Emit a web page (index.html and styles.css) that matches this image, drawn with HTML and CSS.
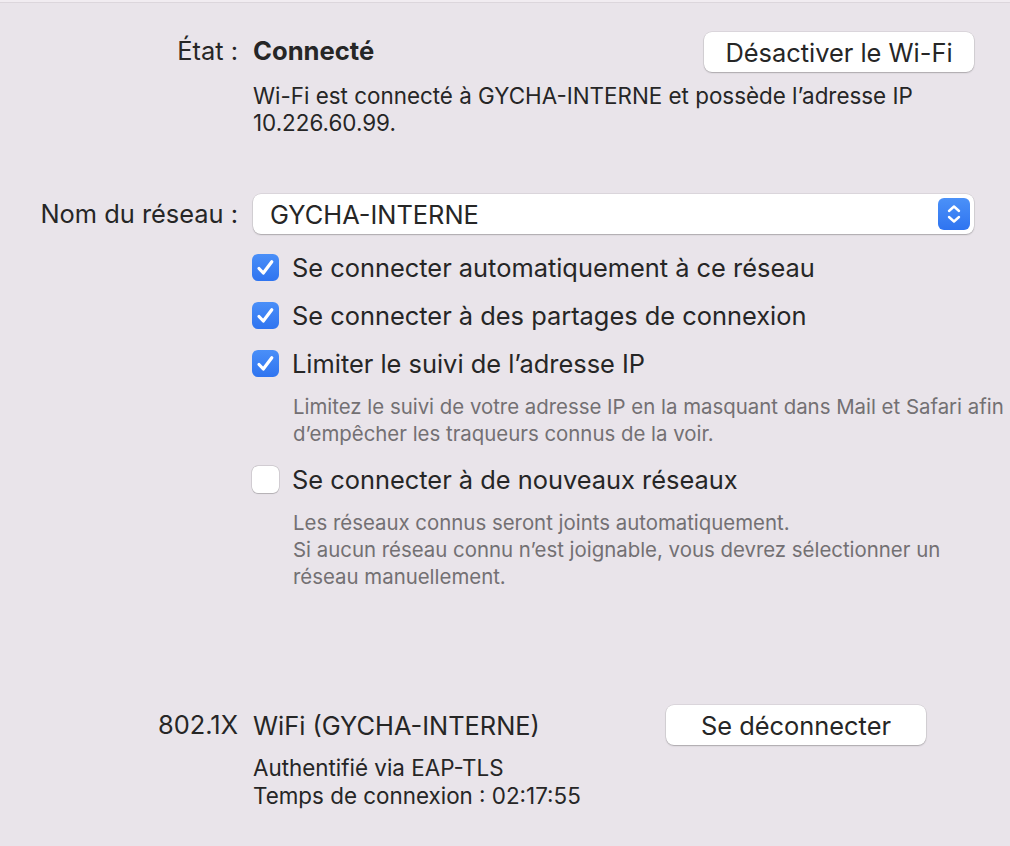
FILE: index.html
```html
<!DOCTYPE html>
<html lang="fr">
<head>
<meta charset="utf-8">
<link rel="stylesheet" href="styles.css">
</head>
<body>
<div class="topbar"></div>
<main class="page">
  <section class="grid state">
    <div class="label">État :</div>
    <div class="content">
      <div class="state-line">
        <span class="strong">Connecté</span>
        <button class="btn btn-wifi">Désactiver le Wi-Fi</button>
      </div>
      <p class="sub">Wi-Fi est connecté à GYCHA-INTERNE et possède l’adresse IP<br>10.226.60.99.</p>
    </div>
  </section>

  <section class="grid network">
    <div class="label">Nom du réseau :</div>
    <div class="content">
      <div class="popup">
        <span>GYCHA-INTERNE</span>
        <span class="stepper">
          <svg width="32" height="32" viewBox="0 0 32 32"><path d="M11 13 L16 8.5 L21 13" fill="none" stroke="#fff" stroke-width="2.4" stroke-linecap="round" stroke-linejoin="round"/><path d="M11 19 L16 23.5 L21 19" fill="none" stroke="#fff" stroke-width="2.4" stroke-linecap="round" stroke-linejoin="round"/></svg>
        </span>
      </div>
      <ul class="checks">
        <li class="check"><span class="box on"><svg width="27" height="27" viewBox="0 0 27 27"><path d="M7 14.5 L11.3 19 L19.8 7.8" fill="none" stroke="#fff" stroke-width="3.2" stroke-linecap="round" stroke-linejoin="round"/></svg></span>Se connecter automatiquement à ce réseau</li>
        <li class="check"><span class="box on"><svg width="27" height="27" viewBox="0 0 27 27"><path d="M7 14.5 L11.3 19 L19.8 7.8" fill="none" stroke="#fff" stroke-width="3.2" stroke-linecap="round" stroke-linejoin="round"/></svg></span>Se connecter à des partages de connexion</li>
        <li class="check"><span class="box on"><svg width="27" height="27" viewBox="0 0 27 27"><path d="M7 14.5 L11.3 19 L19.8 7.8" fill="none" stroke="#fff" stroke-width="3.2" stroke-linecap="round" stroke-linejoin="round"/></svg></span>Limiter le suivi de l’adresse IP</li>
        <li class="desc">Limitez le suivi de votre adresse IP en la masquant dans Mail et Safari afin<br>d’empêcher les traqueurs connus de la voir.</li>
        <li class="check"><span class="box"></span>Se connecter à de nouveaux réseaux</li>
        <li class="desc">Les réseaux connus seront joints automatiquement.<br>Si aucun réseau connu n’est joignable, vous devrez sélectionner un<br>réseau manuellement.</li>
      </ul>
    </div>
  </section>

  <section class="grid dot1x">
    <div class="label">802.1X</div>
    <div class="content">
      <div class="dot-line">
        <span>WiFi (GYCHA-INTERNE)</span>
        <button class="btn btn-disc">Se déconnecter</button>
      </div>
      <p class="sub sub2">Authentifié via EAP-TLS<br>Temps de connexion : 02:17:55</p>
    </div>
  </section>
</main>
</body>
</html>
```

FILE: styles.css
```css
html, body {
  margin: 0;
  padding: 0;
}
body {
  background: #e9e4ea;
  font-family: Inter, "Liberation Sans", sans-serif;
  color: #262626;
  width: 1010px;
  height: 846px;
  overflow: hidden;
}
.topbar {
  height: 2px;
  background: #f1ecf1;
  border-bottom: 1px solid #dcd6dc;
}
.page {
  padding-right: 36px;
}
.grid {
  display: grid;
  grid-template-columns: 238px 1fr;
  column-gap: 15px;
}
.label {
  text-align: right;
  font-size: 25.4px;
  line-height: 40px;
  white-space: nowrap;
}
.state {
  margin-top: 29px;
}
.state-line {
  display: flex;
  justify-content: space-between;
  align-items: center;
  height: 40px;
}
.strong {
  font-weight: 700;
  font-size: 25.6px;
  margin-top: -4px;
}
.state .label {
  margin-top: -1px;
}
.btn {
  font-family: inherit;
  font-size: 25.4px;
  color: #262626;
  background: #fff;
  border: none;
  border-radius: 8px;
  height: 40px;
  padding: 0;
  box-shadow: 0 0 0 0.5px rgba(0,0,0,0.12), 0 1px 1.5px rgba(0,0,0,0.22);
}
.btn-wifi {
  width: 270px;
}
.btn-disc {
  width: 260px;
}
.sub {
  margin: 10px 0 0;
  font-size: 22.4px;
  line-height: 27px;
}
.network {
  margin-top: 58px;
}
.popup {
  height: 40px;
  background: #fff;
  border-radius: 8px;
  box-shadow: 0 0 0 0.5px rgba(0,0,0,0.12), 0 1px 1.5px rgba(0,0,0,0.22);
  display: flex;
  align-items: center;
  justify-content: space-between;
  padding: 0 4px 0 17px;
  font-size: 25.4px;
}
.stepper {
  width: 32px;
  height: 32px;
  border-radius: 6px;
  background: linear-gradient(#4b91f8, #2f74f0);
  display: flex;
}
.checks {
  list-style: none;
  margin: 9px 0 0;
  padding: 0;
}
.check {
  display: flex;
  align-items: center;
  height: 48px;
  font-size: 25.4px;
  margin-left: -1px;
}
.box {
  width: 27px;
  height: 27px;
  border-radius: 6px;
  background: #fff;
  box-shadow: 0 0 0 0.5px rgba(0,0,0,0.18), 0 0.5px 1px rgba(0,0,0,0.15);
  margin-right: 13px;
  flex: none;
  display: flex;
}
.box.on {
  background: linear-gradient(#4a8ff8, #2f74f0);
  box-shadow: none;
}
.desc {
  font-size: 20.4px;
  line-height: 27px;
  color: #737073;
  padding-left: 40px;
  margin: 6px -36px 8px 0;
  white-space: nowrap;
}
.dot1x {
  margin-top: 107px;
}
.dot-line {
  display: flex;
  align-items: center;
  height: 40px;
  font-size: 25.4px;
}
.dot-line .btn {
  margin-left: auto;
  margin-right: 48px;
}
.sub2 {
  margin-top: 9px;
  line-height: 28px;
}
```
